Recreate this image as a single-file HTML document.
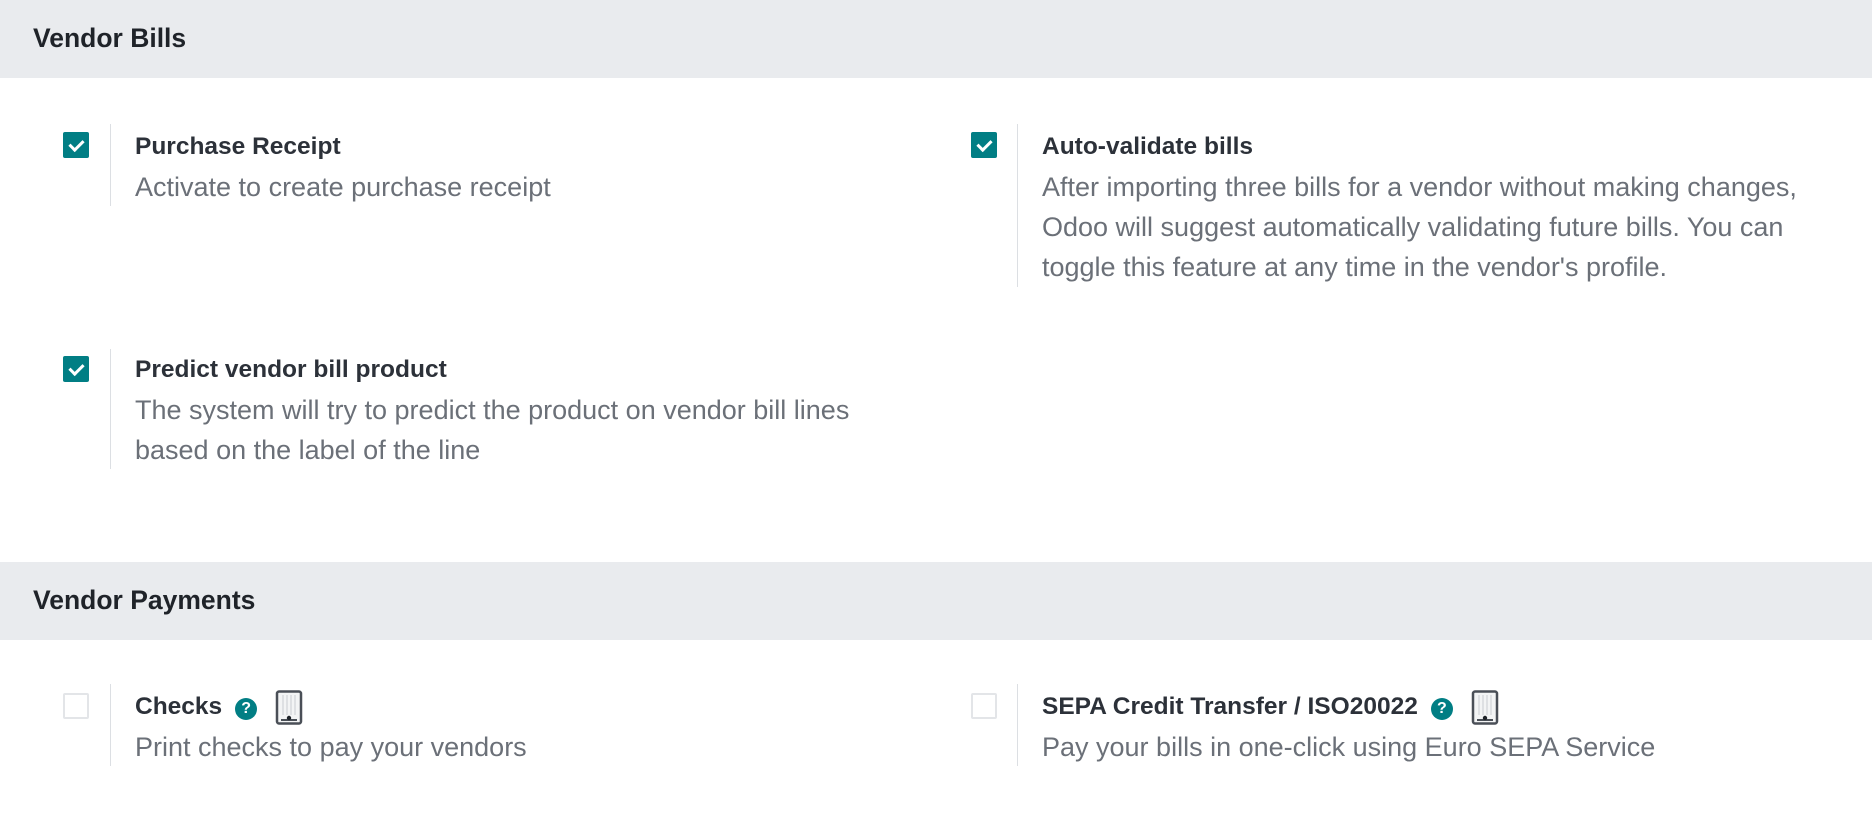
<!DOCTYPE html>
<html><head><meta charset="utf-8"><style>
*{margin:0;padding:0;box-sizing:border-box}
body{width:1872px;height:840px;background:#fff;font-family:"Liberation Sans",sans-serif;position:relative;overflow:hidden}
.hdr{position:absolute;left:0;width:1872px;height:78px;background:#e9ebee}
.hdr span{position:absolute;left:33px;top:23px;font-size:26.5px;font-weight:bold;color:#1f2329}
.cb{position:absolute;width:26px;height:26px;border-radius:2px}
.on{background:#017e84}
.on::after{content:"";position:absolute;left:9px;top:5px;width:6px;height:11px;border:solid #fff;border-width:0 3px 3px 0;transform:rotate(45deg)}
.off{border:2px solid #e3e5e8;background:#fff}
.vl{position:absolute;width:1px;background:#dcdfe3}
.t{position:absolute;font-size:24.5px;font-weight:bold;color:#2c3139;white-space:nowrap;line-height:28px;height:28px}
.d{position:absolute;font-size:27px;color:#6b7078;white-space:nowrap;line-height:40px}
.q{display:inline-block;width:22px;height:22px;border-radius:50%;background:#017e84;color:#fff;font-size:16px;line-height:22px;text-align:center;font-weight:bold;vertical-align:1px;margin-left:13px}
.tab{position:relative;top:-3px;display:inline-block;width:28px;height:35px;vertical-align:top;margin-left:18px}
</style></head><body>
<div class="hdr" style="top:0"><span>Vendor Bills</span></div>

<div class="cb on" style="left:63px;top:132px"></div>
<div class="vl" style="left:110px;top:124px;height:82px"></div>
<div class="t" style="left:135px;top:133px">Purchase Receipt</div>
<div class="d" style="left:135px;top:167px">Activate to create purchase receipt</div>

<div class="cb on" style="left:971px;top:132px"></div>
<div class="vl" style="left:1017px;top:124px;height:163px"></div>
<div class="t" style="left:1042px;top:133px">Auto-validate bills</div>
<div class="d" style="left:1042px;top:167px">After importing three bills for a vendor without making changes,<br>Odoo will suggest automatically validating future bills. You can<br>toggle this feature at any time in the vendor's profile.</div>

<div class="cb on" style="left:63px;top:356px"></div>
<div class="vl" style="left:110px;top:349px;height:120px"></div>
<div class="t" style="left:135px;top:356px">Predict vendor bill product</div>
<div class="d" style="left:135px;top:390px">The system will try to predict the product on vendor bill lines<br>based on the label of the line</div>

<div class="hdr" style="top:562px"><span>Vendor Payments</span></div>

<div class="cb off" style="left:63px;top:693px"></div>
<div class="vl" style="left:110px;top:684px;height:82px"></div>
<div class="t" style="left:135px;top:693px">Checks<span class="q">?</span><svg class="tab" viewBox="0 0 28 35"><rect x="2" y="1.5" width="24" height="32" rx="2" fill="#f3f4f5" stroke="#4a4f57" stroke-width="2.5"/><path d="M8 5v20M12 5v20M16 5v20M20 5v20" stroke="#c9ccd1" stroke-width="1"/><path d="M6 30h16" stroke="#4a4f57" stroke-width="2"/><circle cx="14" cy="28" r="2.2" fill="#1f2329"/></svg></div>
<div class="d" style="left:135px;top:727px">Print checks to pay your vendors</div>

<div class="cb off" style="left:971px;top:693px"></div>
<div class="vl" style="left:1017px;top:684px;height:82px"></div>
<div class="t" style="left:1042px;top:693px">SEPA Credit Transfer / ISO20022<span class="q">?</span><svg class="tab" viewBox="0 0 28 35"><rect x="2" y="1.5" width="24" height="32" rx="2" fill="#f3f4f5" stroke="#4a4f57" stroke-width="2.5"/><path d="M8 5v20M12 5v20M16 5v20M20 5v20" stroke="#c9ccd1" stroke-width="1"/><path d="M6 30h16" stroke="#4a4f57" stroke-width="2"/><circle cx="14" cy="28" r="2.2" fill="#1f2329"/></svg></div>
<div class="d" style="left:1042px;top:727px">Pay your bills in one-click using Euro SEPA Service</div>
</body></html>
